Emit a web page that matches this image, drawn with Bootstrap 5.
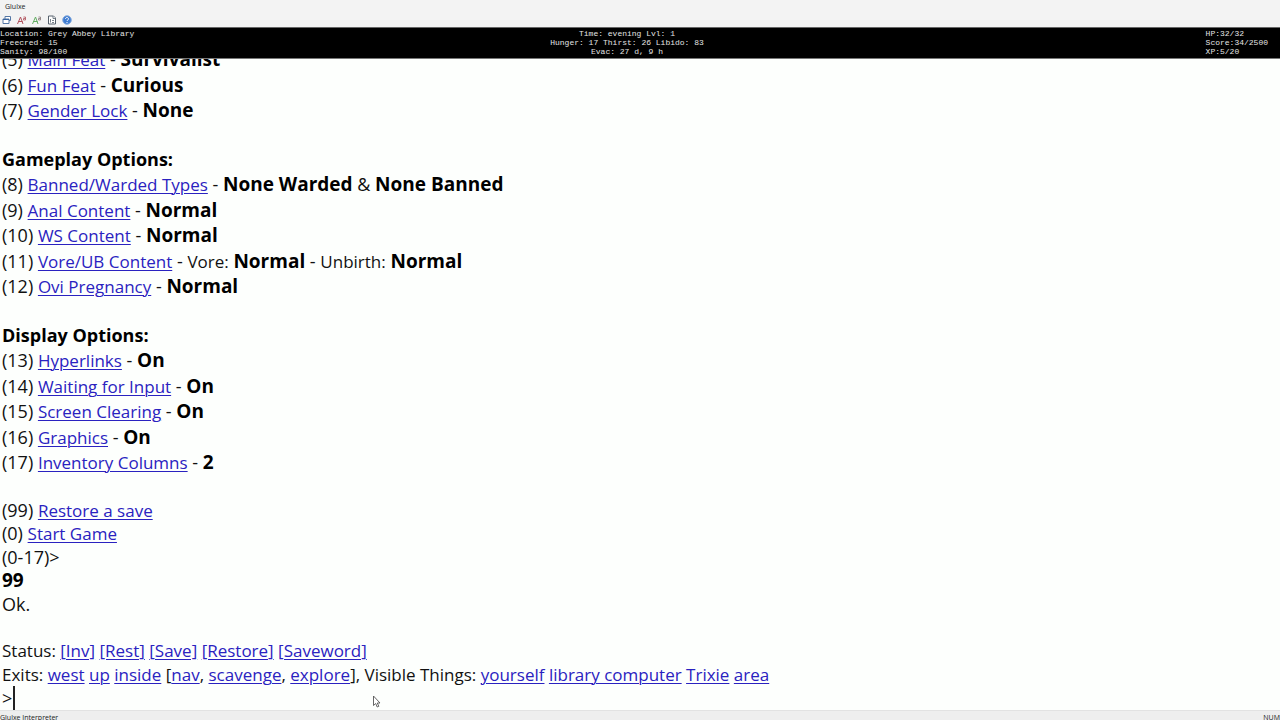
<!DOCTYPE html>
<html lang="en">
<head>
<meta charset="utf-8">
<meta name="viewport" content="width=device-width, initial-scale=1">
<title>Glulxe</title>
<link href="https://cdn.jsdelivr.net/npm/bootstrap@5.3.0/dist/css/bootstrap.min.css" rel="stylesheet">
<style>
  body { font-family: "Open Sans", "Noto Sans", sans-serif; background: #fdfffd; color: #111; }
  .chrome { background: #f3f3f3; }
  .title-line { font-size: 7px; line-height: 13px; padding-left: 5px; color: #222; }
  .tools { height: 14px; padding-left: 1px; gap: 4px; }
  .tools button { width: 11px; height: 13px; line-height: 0; }
  .tools svg { width: 10px; height: 10px; }
  .stats { background: #000; color: #e4e4e4; font: 8px/9px "Liberation Mono", monospace; border-top: 1px solid #666; white-space: pre; padding: 1px 0 2px; }
  .stats-side { flex: 1 1 0; }
  .stats-mid { padding-right: 14px; }
  .stats-end { padding-right: 12px; }
  .story { font-size: 18px; border-top: 1px solid #777; padding: 0 2px; white-space: nowrap; min-height: 0; }
  .story a { color: #2a22c0; text-decoration: underline; text-underline-offset: 2px; text-decoration-thickness: 1px; }
  .opts a, .opts span, .turn a { font-size: 17px; line-height: 1; }
  .story b { font-size: 19px; line-height: 1; font-weight: 700; color: #000; }
  .story h2 { font-size: 18px; font-weight: 700; line-height: 26px; margin: 0; color: #000; }
  .opts li { line-height: 25px; }
  .opts li:nth-child(even) { line-height: 26px; }
  .opts, .turn { margin-bottom: 23px; }
  .turn p { line-height: 24px; margin: 0; }
  .turn p:nth-child(even) { line-height: 23px; }
  .turn.last { margin-bottom: 0; font-size: 17px; }
  .prompt { height: 24px; line-height: 24px; gap: 1px; }
  .prompt input { border: 0; border-left: 2px solid #222; outline: 0; background: transparent; height: 24px; padding: 0 2px; }
  .foot { background: #eee; border-top: 1px solid #e2e2e2; font-size: 7px; line-height: 14px; height: 10px; color: #222; overflow: hidden; }
  .pointer { position: absolute; left: 372px; top: 695px; width: 9px; height: 13px; pointer-events: none; }
</style>
</head>
<body>
<div class="d-flex flex-column vh-100 overflow-hidden">
  <header class="chrome flex-shrink-0">
    <div class="title-line">Glulxe</div>
    <div class="tools d-flex align-items-center">
      <button class="btn p-0 border-0" aria-label="Open"><svg viewBox="0 0 10 10" fill="#fff" stroke="#5577a5"><path d="M3 1.5h5.5v4H3z"/><path d="M1 4h6v4.500H1z"/><path d="M1 4.500h6" stroke="#3864a0"/></svg></button>
      <button class="btn p-0 border-0" aria-label="Font"><svg viewBox="0 0 10 10" fill="none" stroke="#b0505c"><path d="M.5 9 3.500 2 6 9M1.500 6.500h4"/><path d="M6.500 2h2v3h-2V3.500h2" stroke-width=".8"/></svg></button>
      <button class="btn p-0 border-0" aria-label="Colours"><svg viewBox="0 0 10 10" fill="none" stroke="#63ad63"><path d="M.5 9 3.500 2 6 9M1.500 6.500h4"/><path d="M6.500 2h2v3h-2V3.500h2" stroke="#887878" stroke-width=".8"/></svg></button>
      <button class="btn p-0 border-0" aria-label="Script"><svg viewBox="0 0 10 10" fill="#fff" stroke="#56616c"><path d="M1.500 1h5l2 2v6h-7z"/><path d="M6 1v2.500h2.500M3.500 4v3.500M5 5.500h2M5 7.500h2" stroke-width=".8"/></svg></button>
      <button class="btn p-0 border-0" aria-label="Help"><svg viewBox="0 0 10 10"><circle cx="5" cy="5" r="4.300" fill="#3e7bd0" stroke="#8aaede"/><path d="M3.500 4c0-2 3-2 3 0 0 1-1.500 1-1.500 2M5 7v1" fill="none" stroke="#fff"/></svg></button>
    </div>
  </header>
  <section class="stats d-flex flex-shrink-0" aria-label="Status">
    <div class="stats-side">Location: Grey Abbey Library
Freecred: 15
Sanity: 98/100</div>
    <div class="stats-mid text-center">Time: evening Lvl: 1
Hunger: 17 Thirst: 26 Libido: 83
Evac: 27 d, 9 h</div>
    <div class="stats-side stats-end d-flex justify-content-end"><div>HP:32/32
Score:34/2500
XP:5/20</div></div>
  </section>
  <main class="story flex-grow-1 d-flex flex-column justify-content-end overflow-hidden">
    <ul class="opts list-unstyled">
      <li>(5) <a href="#">Main Feat</a> - <b>Survivalist</b></li>
      <li>(6) <a href="#">Fun Feat</a> - <b>Curious</b></li>
      <li>(7) <a href="#">Gender Lock</a> - <b>None</b></li>
    </ul>
    <h2>Gameplay Options:</h2>
    <ul class="opts list-unstyled">
      <li>(8) <a href="#">Banned/Warded Types</a> - <b>None Warded</b> &amp; <b>None Banned</b></li>
      <li>(9) <a href="#">Anal Content</a> - <b>Normal</b></li>
      <li>(10) <a href="#">WS Content</a> - <b>Normal</b></li>
      <li>(11) <a href="#">Vore/UB Content</a> - <span>Vore:</span> <b>Normal</b> - <span>Unbirth:</span> <b>Normal</b></li>
      <li>(12) <a href="#">Ovi Pregnancy</a> - <b>Normal</b></li>
    </ul>
    <h2>Display Options:</h2>
    <ul class="opts list-unstyled">
      <li>(13) <a href="#">Hyperlinks</a> - <b>On</b></li>
      <li>(14) <a href="#">Waiting for Input</a> - <b>On</b></li>
      <li>(15) <a href="#">Screen Clearing</a> - <b>On</b></li>
      <li>(16) <a href="#">Graphics</a> - <b>On</b></li>
      <li>(17) <a href="#">Inventory Columns</a> - <b>2</b></li>
    </ul>
    <div class="turn">
      <p>(99) <a href="#">Restore a save</a></p>
      <p>(0) <a href="#">Start Game</a></p>
      <p><label for="cmd">(0-17)&gt;</label></p>
      <p><b>99</b></p>
      <p>Ok.</p>
    </div>
    <div class="turn last">
      <p>Status: <a href="#">[Inv]</a> <a href="#">[Rest]</a> <a href="#">[Save]</a> <a href="#">[Restore]</a> <a href="#">[Saveword]</a></p>
      <p>Exits: <a href="#">west</a> <a href="#">up</a> <a href="#">inside</a> [<a href="#">nav</a>, <a href="#">scavenge</a>, <a href="#">explore</a>], Visible Things: <a href="#">yourself</a> <a href="#">library computer</a> <a href="#">Trixie</a> <a href="#">area</a></p>
    </div>
    <div class="prompt d-flex"><label for="cmd">&gt;</label><input id="cmd" class="flex-grow-1" type="text" autocomplete="off"></div>
  </main>
  <footer class="foot d-flex justify-content-between flex-shrink-0"><span>Glulxe Interpreter</span><span>NUM</span></footer>
</div>
<svg class="pointer" viewBox="0 0 9 13" aria-hidden="true"><path d="M1.500 1v9.500l2.200-2 1.500 3.500 1.600-.7-1.500-3.300H8z" fill="#fff" stroke="#555" stroke-width=".9"/></svg>
<script src="https://cdn.jsdelivr.net/npm/bootstrap@5.3.0/dist/js/bootstrap.bundle.min.js"></script>
</body>
</html>
